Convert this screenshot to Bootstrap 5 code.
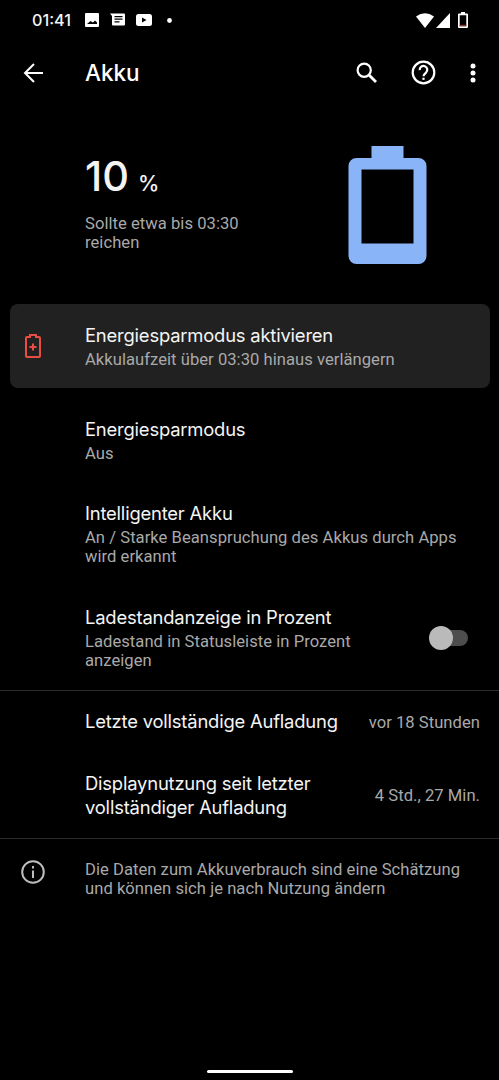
<!DOCTYPE html>
<html lang="de" data-bs-theme="dark">
<head>
<meta charset="utf-8">
<meta name="viewport" content="width=device-width, initial-scale=1">
<title>Akku</title>
<link href="https://cdn.jsdelivr.net/npm/bootstrap@5.3.0/dist/css/bootstrap.min.css" rel="stylesheet">
<style>
body{background:#000;color:#f4f4f4;font-family:Roboto,sans-serif;height:1080px;overflow:hidden}
svg{display:block;flex:none}
.statusbar{height:40px;padding:0 29px 0 32px;font:500 16.2px/40px Inter,sans-serif}
.appbar{height:65px;padding:0 14px 0 20px}
.appbar h1{font:500 22.5px/28px Inter,sans-serif;margin:0 0 0 39px}
.hero{height:199px;padding:41px 72px 0 85px}
.level{font:500 41.5px/60px Inter,sans-serif;height:60px;gap:9px}
.level small{font-size:21.5px;font-weight:500;line-height:28px}
.sub-text{font-size:16.6px;line-height:19.4px;color:#a9a9a9;letter-spacing:.035px}
.item-title{font:400 18.4px/24px Inter,sans-serif;letter-spacing:-.19px}
.item-title + .sub-text{margin-top:2.5px}
.setting{padding:19px 19px 19.5px 0}
.lead-col{width:85px;flex:none;padding-left:20px}
.tip{margin:0 9.5px 9.6px;background:#212121;border-radius:8px}
.tip .lead-col{width:75.5px;padding-left:10.5px}
.rule{border-top:1px solid #2b2b2b}
.last-charge{padding-top:18px;padding-bottom:19px}
.screen-use{padding-top:18.5px;padding-bottom:19.5px}
.note{padding-top:20.5px}
.toggle{width:39px;height:24px;margin-right:12px}
.toggle .track{position:absolute;right:0;top:4px;width:34px;height:16px;border-radius:8px;background:#4d4d4d}
.toggle .thumb{position:absolute;left:0;top:0;width:24px;height:24px;border-radius:50%;background:#bababa}
.home-bar{width:86px;height:3px;background:#fff;border-radius:2px;margin-bottom:7px}
</style>
</head>
<body class="d-flex flex-column">
<div class="statusbar d-flex align-items-center justify-content-between">
  <div class="d-flex align-items-center">
    <span>01:41</span>
    <svg style="margin-left:14px" width="14" height="14" viewBox="0 0 14 14"><path fill="#fff" fill-rule="evenodd" d="M1 0h12a1 1 0 0 1 1 1v12a1 1 0 0 1-1 1H1a1 1 0 0 1-1-1V1a1 1 0 0 1 1-1zM2 11h10V9.500L10 7.500 8 9.500 5.500 8z"/></svg>
    <svg style="margin-left:11px" width="15" height="14" viewBox="0 0 15 14"><path fill="#fff" fill-rule="evenodd" d="M0 .5h14a1 1 0 0 1 1 1v10a1 1 0 0 1-1 1H3a1 1 0 0 1-1-1V3zM4.500 3v1.200h8V3zm0 2.600v1.200h8V5.600zm0 2.700v1.200h5V8.300z"/></svg>
    <svg style="margin-left:10.500px" width="16" height="12" viewBox="0 0 16 12"><path fill="#fff" fill-rule="evenodd" d="M2.500 0h11A2.500 2.500 0 0 1 16 2.500v7a2.500 2.500 0 0 1-2.500 2.500h-11A2.500 2.500 0 0 1 0 9.500v-7A2.500 2.500 0 0 1 2.500 0zM6 3.500v5L10.500 6z"/></svg>
    <svg style="margin-left:15px" width="5" height="5" viewBox="0 0 5 5"><circle cx="2.500" cy="2.500" r="2.400" fill="#fff"/></svg>
  </div>
  <div class="d-flex align-items-center">
    <svg width="18" height="15" viewBox="0 0 18 15"><path fill="#fff" d="M0 3.600Q9-3 18 3.600L9 15z"/></svg>
    <svg style="margin-left:2px" width="14" height="15" viewBox="0 0 14 15"><path fill="#fff" d="M14 0v15H0z"/></svg>
    <svg style="margin-left:8px;margin-right:2px" width="10" height="16" viewBox="0 0 10 16"><path fill="#fff" fill-rule="evenodd" d="M3 0h4v1.500h2a1 1 0 0 1 1 1V15a1 1 0 0 1-1 1H1a1 1 0 0 1-1-1V2.500a1 1 0 0 1 1-1h2zM1.700 3.200v11h6.600v-11z"/><path fill="#8d342e" d="M1.700 12.800h6.600v1.400H1.700z"/></svg>
  </div>
</div>

<header class="appbar d-flex align-items-center">
  <svg width="26" height="26" viewBox="0 0 26 26" fill="none" stroke="#fff" stroke-width="2"><path d="M23 13H5M14 4l-9 9 9 9"/></svg>
  <h1>Akku</h1>
  <div class="d-flex align-items-center ms-auto">
    <svg width="22" height="22" viewBox="0 0 22 22" fill="none" stroke="#fff" stroke-width="2.200"><circle cx="8.200" cy="8.200" r="6.600"/><path stroke-width="2.800" d="m13 13 7 7"/></svg>
    <svg style="margin-left:33px" width="25" height="25" viewBox="0 0 25 25" fill="none" stroke="#fff" stroke-width="2.200"><circle cx="12.500" cy="12.500" r="10.800"/><path d="M8.700 10.100a3.800 3.800 0 1 1 6.300 2.500c-1.500 1.200-2.500 1.900-2.500 3.700"/><path d="M12.500 17.700v2.200"/></svg>
    <svg style="margin-left:25px" width="24" height="24" viewBox="0 0 24 24" fill="#fff"><circle cx="12" cy="5" r="2.500"/><circle cx="12" cy="12" r="2.500"/><circle cx="12" cy="19" r="2.500"/></svg>
  </div>
</header>

<main>
  <section class="hero d-flex justify-content-between align-items-start">
    <div>
      <div class="level d-flex align-items-baseline"><span>10</span><small>%</small></div>
      <div class="sub-text mt-2">Sollte etwa bis 03:30<br>reichen</div>
    </div>
    <svg width="79" height="118" viewBox="0 0 79 118"><path fill="#8ab4f8" fill-rule="evenodd" d="M23.500 0h32v12h15a8 8 0 0 1 8 8v90a8 8 0 0 1-8 8h-62a8 8 0 0 1-8-8V20a8 8 0 0 1 8-8h15zM13.500 23.500v74H65.500v-74z"/></svg>
  </section>

  <section class="tip setting d-flex align-items-center">
    <div class="lead-col"><svg width="26" height="26" viewBox="0 0 26 26" fill="none" stroke="#ea4e43" stroke-width="2"><path d="M7 4h3V2h6v2h3q1 0 1 1v18q0 1-1 1H7q-1 0-1-1V5q0-1 1-1zM13 10.500v7M9.500 14h7"/></svg></div>
    <div><div class="item-title">Energiesparmodus aktivieren</div><div class="sub-text">Akkulaufzeit über 03:30 hinaus verlängern</div></div>
  </section>

  <section class="setting d-flex">
    <div class="lead-col"></div>
    <div><div class="item-title">Energiesparmodus</div><div class="sub-text">Aus</div></div>
  </section>

  <section class="setting d-flex">
    <div class="lead-col"></div>
    <div><div class="item-title">Intelligenter Akku</div><div class="sub-text">An / Starke Beanspruchung des Akkus durch Apps<br>wird erkannt</div></div>
  </section>

  <section class="setting d-flex align-items-center">
    <div class="lead-col"></div>
    <div><div class="item-title">Ladestandanzeige in Prozent</div><div class="sub-text">Ladestand in Statusleiste in Prozent<br>anzeigen</div></div>
    <div class="toggle position-relative ms-auto" role="switch" aria-checked="false"><span class="track"></span><span class="thumb"></span></div>
  </section>

  <section class="rule setting last-charge d-flex align-items-center">
    <div class="lead-col"></div>
    <div class="item-title text-nowrap">Letzte vollständige Aufladung</div>
    <div class="sub-text ms-auto text-nowrap">vor 18 Stunden</div>
  </section>

  <section class="setting screen-use d-flex align-items-center">
    <div class="lead-col"></div>
    <div class="item-title text-nowrap">Displaynutzung seit letzter<br>vollständiger Aufladung</div>
    <div class="sub-text ms-auto text-nowrap">4 Std., 27 Min.</div>
  </section>

  <section class="rule setting note d-flex">
    <div class="lead-col"><svg width="26" height="26" viewBox="0 0 26 26" fill="none" stroke="#bdbdbd" stroke-width="2"><circle cx="13" cy="12" r="10.800"/><path d="M13 6v2.400M13 10.500V18"/></svg></div>
    <div class="sub-text">Die Daten zum Akkuverbrauch sind eine Schätzung<br>und können sich je nach Nutzung ändern</div>
  </section>
</main>
<div class="home-bar mt-auto mx-auto"></div>
<script src="https://cdn.jsdelivr.net/npm/bootstrap@5.3.0/dist/js/bootstrap.bundle.min.js"></script>
</body>
</html>
